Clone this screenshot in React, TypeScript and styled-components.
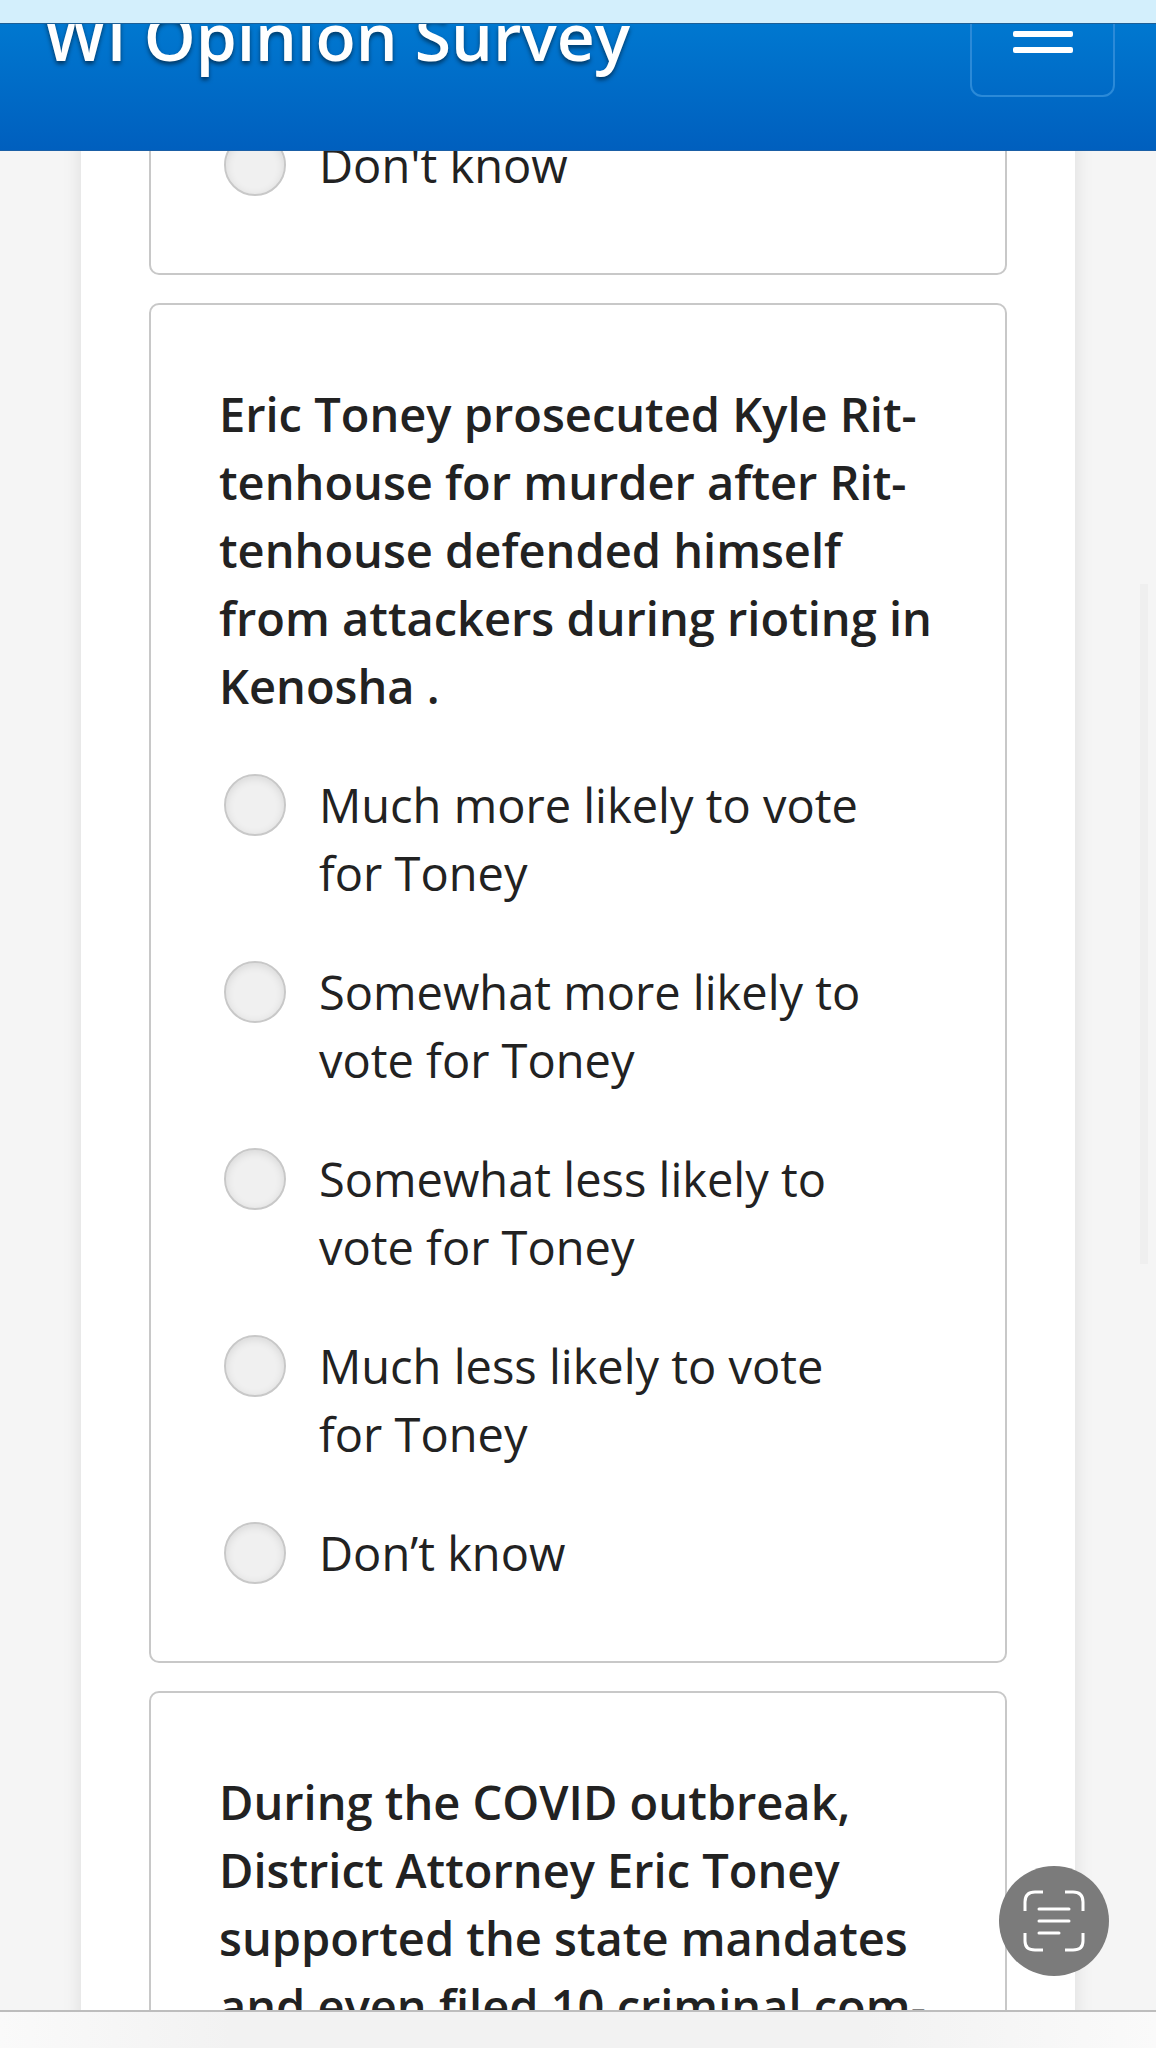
import React, { useId } from "react";
import styled, { createGlobalStyle } from "styled-components";

const GlobalStyle = createGlobalStyle`
  *, *::before, *::after { box-sizing: border-box; }
  body {
    margin: 0;
    background: #f5f5f5;
    color: #222;
    font-family: "Open Sans", "Noto Sans", sans-serif;
  }
`;

const Screen = styled.div`
  position: relative;
  display: flex;
  flex-direction: column;
  height: 100vh;
  overflow: hidden;
`;

const StatusStrip = styled.div`
  flex: none;
  height: 23px;
  background: #d3effc;
`;

const Header = styled.header`
  flex: none;
  display: flex;
  justify-content: space-between;
  align-items: flex-end;
  height: 128px;
  padding: 0 41px 53px 44px;
  overflow: hidden;
  background: linear-gradient(#0078d0, #005fbe);
  border-top: 1px solid #1d5f96;
  border-bottom: 1px solid #1a5fa6;
`;

const Title = styled.h1`
  margin: 0;
  color: #fff;
  font-size: 66px;
  font-weight: 600;
  line-height: 124px;
  white-space: nowrap;
  text-shadow: 0 3px 4px rgba(0, 0, 0, 0.5);
`;

const MenuButton = styled.button`
  flex: none;
  display: flex;
  flex-direction: column;
  align-items: center;
  justify-content: center;
  gap: 10px;
  width: 145px;
  height: 126px;
  padding: 0;
  background: transparent;
  border: 2px solid #2b8ad8;
  border-radius: 12px;
`;

const MenuBar = styled.span`
  width: 60px;
  height: 6px;
  border-radius: 2px;
  background: #fff;
`;

const Survey = styled.main`
  flex: 1;
  min-height: 0;
  padding: 0 81px;
  overflow: hidden;
`;

const Sheet = styled.form`
  display: flex;
  flex-direction: column;
  gap: 28px;
  margin-top: -97px;
  padding: 0 68px 28px;
  background: #fff;
  box-shadow: 0 0 18px rgba(0, 0, 0, 0.1);
`;

const Card = styled.section`
  display: flex;
  flex-direction: column;
  gap: 51px;
  padding: 75px 68px 74px;
  border: 2px solid #c8c8c8;
  border-radius: 10px;
`;

const Question = styled.h2`
  margin: 0;
  font-size: 47px;
  font-weight: 600;
  line-height: 68px;
  hyphens: manual;
`;

const Option = styled.label`
  display: flex;
  align-items: flex-start;
  gap: 33px;
  padding: 0 56px 0 5px;
  font-size: 47px;
  line-height: 68px;
`;

const Radio = styled.input`
  appearance: none;
  flex: none;
  width: 62px;
  height: 62px;
  margin: 3px 0 0;
  background: #f0f0f0;
  border: 2px solid #c8c8c8;
  border-radius: 50%;
  box-shadow: inset 0 2px 8px rgba(0, 0, 0, 0.1);
  &:checked { background: #0070c9; }
`;

const ScrollThumb = styled.div`
  position: absolute;
  top: 584px;
  right: 8px;
  width: 8px;
  height: 680px;
  background: #efefef;
`;

const ScanButton = styled.button`
  position: absolute;
  right: 47px;
  bottom: 72px;
  width: 110px;
  height: 110px;
  padding: 0;
  border: 0;
  border-radius: 50%;
  background: #7b7b7b;
`;

const BottomBar = styled.footer`
  flex: none;
  height: 38px;
  background: linear-gradient(90deg, #fafafa, #f2f2f2 20%, #f2f2f2 75%, #fafafa);
  border-top: 2px solid #bdbdbd;
`;

const CHOICES = [
  "Much more likely to vote for Toney",
  "Somewhat more likely to vote for Toney",
  "Somewhat less likely to vote for Toney",
  "Much less likely to vote for Toney",
  "Don’t know",
];

function Item({ question, choices }: { question?: string; choices: string[] }) {
  const name = useId();
  return (
    <Card>
      {question && <Question>{question}</Question>}
      {choices.map((choice) => (
        <Option key={choice}>
          <Radio type="radio" name={name} value={choice} />
          <span>{choice}</span>
        </Option>
      ))}
    </Card>
  );
}

function ScanIcon() {
  return (
    <svg width="110" height="110" viewBox="0 0 110 110" fill="none" stroke="#fff" strokeWidth="3" aria-hidden="true">
      <path d="M26 45V36Q26 26 36 26H44M66 26H74Q84 26 84 36V45M84 67V75Q84 84 74 84H66M44 84H36Q26 84 26 75V67" />
      <path d="M40 43H70M40 55H70M40 67H60" strokeLinecap="round" />
    </svg>
  );
}

export default function App() {
  return (
    <>
      <GlobalStyle />
      <Screen>
        <StatusStrip />
        <Header>
          <Title>WI Opinion Survey</Title>
          <MenuButton type="button" aria-label="Menu">
            <MenuBar />
            <MenuBar />
            <MenuBar />
          </MenuButton>
        </Header>
        <Survey>
          <Sheet>
            <Item choices={["Don't know"]} />
            <Item
              question={"Eric Toney prosecuted Kyle Rit\u00ADtenhouse for murder after Rit\u00ADtenhouse defended himself from attackers during rioting in Kenosha ."}
              choices={CHOICES}
            />
            <Item
              question={"During the COVID outbreak, District Attorney Eric Toney supported the state mandates and even filed 10 criminal com\u00ADplaints"}
              choices={[]}
            />
          </Sheet>
        </Survey>
        <BottomBar />
        <ScrollThumb />
        <ScanButton type="button" aria-label="Scan text">
          <ScanIcon />
        </ScanButton>
      </Screen>
    </>
  );
}
